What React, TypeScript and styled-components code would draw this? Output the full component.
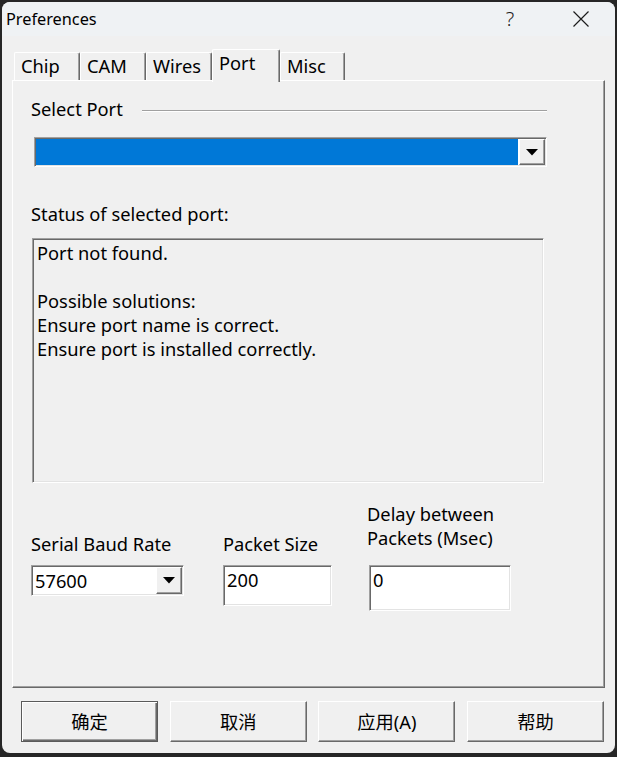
import React from 'react';
import styled, { createGlobalStyle, css } from 'styled-components';

const UI = `"Noto Sans", "Noto Sans CJK SC", sans-serif`;
const FS = '18.3px';

const Global = createGlobalStyle`
  html, body { margin: 0; padding: 0; background: #262626; }
  body { width: 617px; height: 757px; overflow: hidden; font-family: ${UI}; color: #000; }
  * { box-sizing: border-box; }
`;

const sunken = css`
  border: 1px solid;
  border-color: #a0a0a0 #ffffff #ffffff #a0a0a0;
  box-shadow: inset 1px 1px #696969, inset -1px -1px #e3e3e3;
  padding: 1px;
`;

const raised = css`
  border: 1px solid;
  border-color: #ffffff #696969 #696969 #ffffff;
  box-shadow: inset -1px -1px #a0a0a0;
`;

const Window = styled.div`
  margin: 2px 2px 0 2px;
  width: 613px;
  height: 751px;
  border-radius: 8px;
  overflow: hidden;
  background: #f0f0f0;
  display: flex;
  flex-direction: column;
`;

const TitleBar = styled.div`
  height: 34px;
  flex: none;
  background: #eff2f4;
  display: flex;
  align-items: center;
  padding: 0 11px 0 4px;
`;

const TitleText = styled.div`
  flex: 1;
  font-size: 16.3px;
  line-height: 20px;
  color: #000;
`;

const HelpGlyph = styled.div`
  width: 24px;
  margin-right: 36px;
  text-align: center;
  font-size: 20px;
  font-weight: 300;
  line-height: 24px;
  color: #1c1c1c;
`;

const CloseBox = styled.div`
  width: 46px;
  height: 34px;
  display: flex;
  align-items: center;
  justify-content: center;
`;

const Body = styled.div`
  flex: 1;
  padding: 13px 10px 0 10px;
  display: flex;
  flex-direction: column;
`;

const TabStrip = styled.div`
  height: 31px;
  display: flex;
  align-items: flex-end;
  padding-left: 2px;
`;

const Tab = styled.div<{ $active?: boolean; $w: number }>`
  width: ${(p) => p.$w}px;
  height: ${(p) => (p.$active ? 33 : 28)}px;
  margin-bottom: ${(p) => (p.$active ? -2 : 0)}px;
  position: relative;
  z-index: ${(p) => (p.$active ? 2 : 1)};
  background: #f0f0f0;
  border-top: 1px solid #ffffff;
  border-left: 1px solid #ffffff;
  border-right: 1px solid #696969;
  box-shadow: inset -1px 0 #a0a0a0;
  border-radius: 2px 2px 0 0;
  padding: 1px 0 0 6px;
  font-size: ${FS};
  line-height: 24px;
`;

const Panel = styled.div`
  height: 608px;
  border-top: 1px solid #ffffff;
  border-left: 1px solid #ffffff;
  border-right: 1px solid #696969;
  border-bottom: 1px solid #696969;
  box-shadow: inset -1px -1px #a0a0a0;
  padding: 16px 0 0 18px;
  display: flex;
  flex-direction: column;
  align-items: flex-start;
`;

const Label = styled.div<{ $mb?: number }>`
  font-size: ${FS};
  line-height: 24px;
  white-space: nowrap;
  margin-bottom: ${(p) => p.$mb ?? 0}px;
`;

const GroupHeader = styled.div`
  height: 24px;
  display: flex;
  align-items: flex-start;
`;

const Rule = styled.div`
  width: 405px;
  height: 2px;
  margin: 13px 0 0 19px;
  border-top: 1px solid #a0a0a0;
  border-bottom: 1px solid #ffffff;
`;

const Combo = styled.div<{ $w: number; $h: number; $ml?: number; $mt?: number }>`
  ${sunken};
  width: ${(p) => p.$w}px;
  height: ${(p) => p.$h}px;
  margin-left: ${(p) => p.$ml ?? 0}px;
  margin-top: ${(p) => p.$mt ?? 0}px;
  background: #ffffff;
  display: flex;
`;

const ComboField = styled.div<{ $selected?: boolean }>`
  flex: 1;
  background: ${(p) => (p.$selected ? '#0078d7' : '#ffffff')};
  margin-right: 1px;
  padding: 2px 0 0 2px;
  font-size: ${FS};
  line-height: 24px;
`;

const DropButton = styled.div`
  ${raised};
  width: 26px;
  background: #f0f0f0;
  display: flex;
  align-items: center;
  justify-content: center;
`;

const StatusLabelWrap = styled.div`
  margin-top: 35px;
`;

const StatusBox = styled.div`
  ${sunken};
  width: 512px;
  height: 245px;
  margin: 12px 0 0 1px;
  padding: 2px 4px;
  background: #f0f0f0;
  font-size: ${FS};
  line-height: 24px;
`;

const Line = styled.div`
  height: 24px;
  white-space: nowrap;
`;

const BottomRow = styled.div`
  margin-top: 19px;
  display: flex;
  align-items: flex-start;
`;

const Field = styled.div<{ $ml: number }>`
  display: flex;
  flex-direction: column;
  margin-left: ${(p) => p.$ml}px;
`;

const LabelArea = styled.div`
  height: 54px;
  display: flex;
  flex-direction: column;
  justify-content: flex-end;
  margin-bottom: 9px;
`;

const TextBox = styled.div<{ $w: number; $h: number; $ml?: number }>`
  ${sunken};
  width: ${(p) => p.$w}px;
  height: ${(p) => p.$h}px;
  margin-left: ${(p) => p.$ml ?? 0}px;
  background: #ffffff;
  padding: 2px 3px;
  font-size: ${FS};
  line-height: 24px;
`;

const ButtonRow = styled.div`
  margin: 13px 1px 0 9px;
  display: flex;
  justify-content: space-between;
`;

const DlgButton = styled.div<{ $default?: boolean }>`
  width: 137px;
  height: 41px;
  background: #f0f0f0;
  display: flex;
  align-items: center;
  justify-content: center;
  font-size: ${FS};
  padding-bottom: 1px;
  ${(p) =>
    p.$default
      ? css`
          border: 1px solid #5a5a5a;
          box-shadow: inset 1px 1px #ffffff, inset -1px -1px #696969, inset -2px -2px #a0a0a0;
        `
      : raised};
`;

const Arrow = () => (
  <svg width="12" height="7" viewBox="0 0 12 7">
    <polygon points="0,0 12,0 6,6.5" fill="#000" />
  </svg>
);

const tabs = [
  { label: 'Chip', w: 66 },
  { label: 'CAM', w: 66 },
  { label: 'Wires', w: 66 },
  { label: 'Port', w: 68, active: true },
  { label: 'Misc', w: 65 },
];

export default function App() {
  return (
    <>
      <Global />
      <Window>
        <TitleBar>
          <TitleText>Preferences</TitleText>
          <HelpGlyph>?</HelpGlyph>
          <CloseBox>
            <svg width="16" height="16" viewBox="0 0 16 16">
              <path d="M0.5 0.5 L15.5 15.5 M15.5 0.5 L0.5 15.5" stroke="#1c1c1c" strokeWidth="1.2" />
            </svg>
          </CloseBox>
        </TitleBar>
        <Body>
          <TabStrip>
            {tabs.map((t) => (
              <Tab key={t.label} $w={t.w} $active={t.active}>
                {t.label}
              </Tab>
            ))}
          </TabStrip>
          <Panel>
            <GroupHeader>
              <Label>Select Port</Label>
              <Rule />
            </GroupHeader>
            <Combo $w={513} $h={30} $ml={3} $mt={16}>
              <ComboField $selected />
              <DropButton>
                <Arrow />
              </DropButton>
            </Combo>
            <StatusLabelWrap>
              <Label>Status of selected port:</Label>
            </StatusLabelWrap>
            <StatusBox>
              <Line>Port not found.</Line>
              <Line />
              <Line>Possible solutions:</Line>
              <Line>Ensure port name is correct.</Line>
              <Line>Ensure port is installed correctly.</Line>
            </StatusBox>
            <BottomRow>
              <Field $ml={0}>
                <LabelArea>
                  <Label>Serial Baud Rate</Label>
                </LabelArea>
                <Combo $w={153} $h={31}>
                  <ComboField>57600</ComboField>
                  <DropButton>
                    <Arrow />
                  </DropButton>
                </Combo>
              </Field>
              <Field $ml={39}>
                <LabelArea>
                  <Label>Packet Size</Label>
                </LabelArea>
                <TextBox $w={109} $h={41}>200</TextBox>
              </Field>
              <Field $ml={35}>
                <LabelArea>
                  <Label>Delay between</Label>
                  <Label $mb={6}>Packets (Msec)</Label>
                </LabelArea>
                <TextBox $w={142} $h={46} $ml={2}>0</TextBox>
              </Field>
            </BottomRow>
          </Panel>
          <ButtonRow>
            <DlgButton $default>确定</DlgButton>
            <DlgButton>取消</DlgButton>
            <DlgButton>应用(A)</DlgButton>
            <DlgButton>帮助</DlgButton>
          </ButtonRow>
        </Body>
      </Window>
    </>
  );
}
